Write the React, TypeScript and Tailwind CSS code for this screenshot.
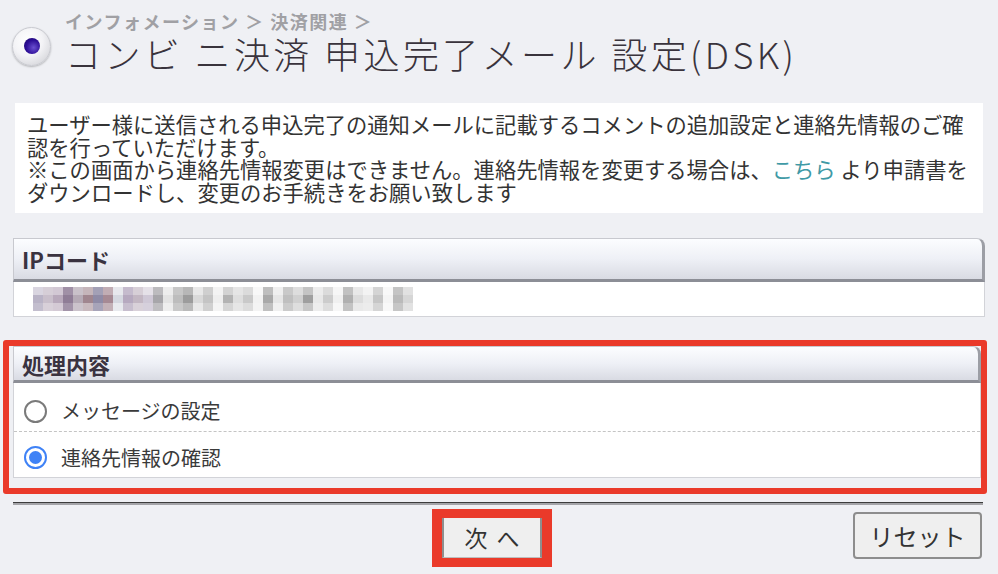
import React, { useState } from 'react';

const jp = { fontFamily: '"Noto Sans CJK JP", "Noto Sans", sans-serif' };

// pixelated stand-in for the masked IP code
const mosaicColors = [
    '#b9b3c6', '#c9bfcb', '#b8a9bb', '#8f7d96', '#b5aab5', '#a0868f', '#8f8ba6', '#a68a94',
    '#d5d8e0', '#b6a9bf', '#c3b7c3', '#cfc8d6', '#a7a6aa', '#e3e3e3', '#bdbdbd', '#9c9c9c',
    '#d9d9d9', '#c4c4c4', '#eeeeee', '#b3b3b3', '#dedede', '#c9c9c9', '#f2f2f2', '#a9a9a9',
    '#e6e6e6', '#bfbfbf', '#d0d0d0', '#9f9f9f', '#e8e8e8', '#cccccc', '#f0f0f0', '#b0b0b0',
    '#dcdcdc', '#e9e9e9', '#c6c6c6', '#f4f4f4', '#bababa', '#d6d6d6',
];

function Mosaic() {
    const cols = mosaicColors.length;
    const rows = 3;
    return (
        <svg width={cols * 10} height={rows * 8} className="block">
            {Array.from({ length: rows }).map((_, r) =>
                mosaicColors.map((c, i) => {
                    const shift = (i * 7 + r * 5) % 11;
                    const op = r === 1 ? 1 : 0.55 + shift * 0.03;
                    return <rect key={`${r}-${i}`} x={i * 10} y={r * 8} width={10} height={8} fill={c} opacity={op} />;
                })
            )}
        </svg>
    );
}

function SectionHeader({ label, tall }: { label: string; tall?: boolean }) {
    return (
        <div
            className={`flex items-center pl-[8px] rounded-tr-[8px] border-t border-l border-[#c8c9cf] border-r-[3px] border-r-[#9c9ea5] border-b-[3px] border-b-[#8c8e96] bg-gradient-to-b from-[#fcfdff] via-[#eef0f6] to-[#d9dbe3] ${tall ? 'h-[44px]' : 'h-[37px]'}`}
        >
            <span className="text-[22px] font-bold text-[#3a3340] leading-none" style={jp}>{label}</span>
        </div>
    );
}

function Radio({ checked }: { checked: boolean }) {
    return checked ? (
        <span className="flex items-center justify-center w-[23px] h-[23px] rounded-full border-[2px] border-[#3f82f6] bg-white">
            <span className="w-[13px] h-[13px] rounded-full bg-[#3f82f6]" />
        </span>
    ) : (
        <span className="w-[23px] h-[23px] rounded-full border-[2px] border-[#7a7a7a] bg-white" />
    );
}

export default function App() {
    const [choice, setChoice] = useState('contact');

    return (
        <div className="w-[998px] h-[574px] overflow-hidden bg-[#eff0f4] flex flex-col" style={jp}>
            {/* Title */}
            <div className="flex h-[103px] pl-[12px]">
                <div className="pt-[27px]">
                    <div className="w-[39px] h-[39px] rounded-full flex items-center justify-center border border-[#c9cad0] bg-[radial-gradient(circle_at_40%_35%,#ffffff_0%,#f3f3f6_45%,#c9cacf_100%)] shadow-[0_1px_2px_rgba(0,0,0,0.25)]">
                        <span className="w-[16px] h-[16px] rounded-full -mt-[2px] bg-[radial-gradient(circle_at_60%_60%,#6a4fd0_0%,#2c0d96_55%,#1a0760_100%)]" />
                    </div>
                </div>
                <div className="ml-[14px] flex flex-col">
                    <div className="pt-[10px] h-[33px] text-[18px] leading-[22px] font-bold text-[#a0a0a4] tracking-[1.5px]">
                        インフォメーション ＞ 決済関連 ＞
                    </div>
                    <div className="text-[36px] leading-[40px] font-light text-[#39333c] tracking-[3.4px] whitespace-nowrap">
                        コンビ ニ決済 申込完了メール 設定(DSK)
                    </div>
                </div>
            </div>

            {/* Description */}
            <div className="mx-[15px] bg-white px-[12px] py-[10px] text-[21.3px] leading-[22.5px] text-[#333] whitespace-nowrap">
                ユーザー様に送信される申込完了の通知メールに記載するコメントの追加設定と連絡先情報のご確
                <br />
                認を行っていただけます。
                <br />
                ※この画面から連絡先情報変更はできません。連絡先情報を変更する場合は、
                <a className="text-[#3f9aa6]">こちら</a> より申請書を
                <br />
                ダウンロードし、変更のお手続きをお願い致します
            </div>

            {/* IP code */}
            <div className="mx-[13px] mt-[25px]">
                <SectionHeader label="IPコード" tall />
                <div className="h-[35px] bg-white border-x border-b border-[#d2d3d8] flex items-center pl-[19px]">
                    <Mosaic />
                </div>
            </div>

            {/* Process (highlighted) */}
            <div className="mt-[23px] ml-[3px] mr-[11px] border-[6px] border-[#ea3a2a] rounded-[3px] pl-[4px] pb-[10px]">
                <SectionHeader label="処理内容" />
                <div className="bg-white border-x border-b border-[#d2d3d8] text-[20px] text-[#3a3a3a]">
                    <label className="h-[49px] flex items-center pt-[8px] pl-[10px] gap-[14px] border-b border-dashed border-[#c4c4c4] cursor-pointer" onClick={() => setChoice('message')}>
                        <Radio checked={choice === 'message'} />
                        <span>メッセージの設定</span>
                    </label>
                    <label className="h-[45px] flex items-center pt-[6px] pl-[10px] gap-[14px] cursor-pointer" onClick={() => setChoice('contact')}>
                        <Radio checked={choice === 'contact'} />
                        <span>連絡先情報の確認</span>
                    </label>
                </div>
            </div>

            {/* Divider */}
            <div className="mx-[13px] mt-[8px] mr-[15px] h-[3px] border-t border-[#3c3c3c] bg-[#a4a4a8]" />

            {/* Buttons */}
            <div className="flex items-start mx-[13px] mr-[16px] mt-[4px]">
                <div className="ml-[419px] border-[9px] border-x-[10px] border-[#ea3a2a]">
                    <button className="w-[100px] h-[40px] bg-[#efefef] border-x-2 border-[#8e8e8e] border-b border-b-[#bdbdbd] text-[23px] text-[#333] tracking-[2px] pl-[2px] leading-none">
                        次 へ
                    </button>
                </div>
                <button className="ml-auto mt-[3px] w-[129px] h-[47px] rounded-[4px] border-2 border-[#8d8d8d] bg-[#efefef] text-[24px] text-[#333] leading-none">
                    リセット
                </button>
            </div>
        </div>
    );
}
